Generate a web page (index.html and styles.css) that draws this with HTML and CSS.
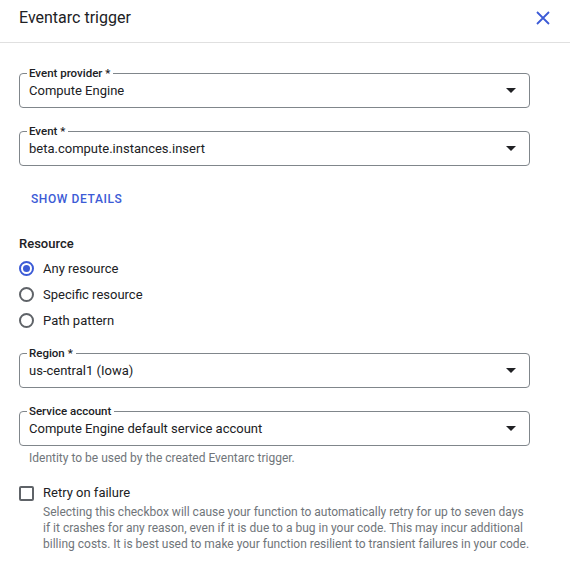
FILE: index.html
```html
<!DOCTYPE html>
<html>
<head>
<meta charset="utf-8">
<link rel="stylesheet" href="styles.css">
</head>
<body>
<div class="panel">
  <header class="header">
    <h1 class="title">Eventarc trigger</h1>
    <button class="close" aria-label="Close">
      <svg width="14" height="14" viewBox="0 0 14 14"><path d="M1 1L13 13M13 1L1 13" stroke="currentColor" stroke-width="1.8" fill="none"/></svg>
    </button>
  </header>
  <main class="content">
    <div class="field first">
      <span class="field-label">Event provider *</span>
      <span class="field-value">Compute Engine</span>
      <span class="arrow"></span>
    </div>
    <div class="field">
      <span class="field-label">Event *</span>
      <span class="field-value">beta.compute.instances.insert</span>
      <span class="arrow"></span>
    </div>
    <button class="text-btn">SHOW DETAILS</button>
    <div class="section-title">Resource</div>
    <div class="radios">
      <label class="radio-row"><span class="radio checked"></span>Any resource</label>
      <label class="radio-row"><span class="radio"></span>Specific resource</label>
      <label class="radio-row"><span class="radio"></span>Path pattern</label>
    </div>
    <div class="field region">
      <span class="field-label">Region *</span>
      <span class="field-value">us-central1 (Iowa)</span>
      <span class="arrow"></span>
    </div>
    <div class="field">
      <span class="field-label">Service account</span>
      <span class="field-value">Compute Engine default service account</span>
      <span class="arrow"></span>
    </div>
    <div class="hint">Identity to be used by the created Eventarc trigger.</div>
    <div class="check-row">
      <span class="checkbox"></span>
      <div class="check-text">
        <div class="check-label">Retry on failure</div>
        <div class="check-desc">Selecting this checkbox will cause your function to automatically retry for up to seven days if it crashes for any reason, even if it is due to a bug in your code. This may incur additional billing costs. It is best used to make your function resilient to transient failures in your code.</div>
      </div>
    </div>
  </main>
</div>
</body>
</html>
```

FILE: styles.css
```css
* { box-sizing: border-box; }
html, body { margin: 0; padding: 0; background: #fff; }
body {
  font-family: Roboto, "Liberation Sans", Arial, sans-serif;
  color: #202124;
}
.panel { width: 570px; }
.header {
  height: 43px;
  display: flex;
  align-items: center;
  justify-content: space-between;
  padding: 0 20px 7px 19px;
  border-bottom: 1px solid #e0e0e0;
}
.title {
  margin: 0;
  font-size: 16px;
  font-weight: 400;
  line-height: 24px;
  color: #202124;
}
.close {
  border: 0;
  background: none;
  padding: 0;
  width: 14px;
  height: 14px;
  color: #3c5bd6;
  display: flex;
}
.content {
  padding: 0 40px 0 19px;
}
.field {
  position: relative;
  height: 35px;
  border: 1px solid #80868b;
  border-radius: 4px;
  display: flex;
  align-items: center;
  padding: 0 13px 0 9px;
  margin-top: 23px;
}
.field.first { margin-top: 30px; }
.field.region { margin-top: 20px; }
.field-label {
  position: absolute;
  top: -8px;
  left: 7px;
  padding: 0 3px 0 2px;
  background: #fff;
  font-size: 11.5px;
  font-weight: 500;
  line-height: 14px;
  color: #202124;
}
.field-value {
  flex: 1;
  font-size: 13px;
  line-height: 16px;
  padding-top: 1px;
}
.arrow {
  width: 0;
  height: 0;
  border-left: 5px solid transparent;
  border-right: 5px solid transparent;
  border-top: 5px solid #202124;
}
.text-btn {
  display: block;
  border: 0;
  background: none;
  font-family: inherit;
  font-size: 12px;
  font-weight: 500;
  letter-spacing: 0.6px;
  color: #3c5bd6;
  padding: 0 12px;
  height: 36px;
  margin-top: 15px;
}
.section-title {
  font-size: 13px;
  font-weight: 500;
  line-height: 16px;
  margin-top: 19px;
}
.radios {
  display: flex;
  flex-direction: column;
  margin-top: 3px;
}
.radio-row {
  display: flex;
  align-items: center;
  gap: 9px;
  height: 26px;
  font-size: 13px;
}
.radio {
  width: 15px;
  height: 15px;
  border-radius: 50%;
  border: 2px solid #5f6368;
  display: flex;
  align-items: center;
  justify-content: center;
}
.radio.checked { border-color: #3c5bd6; }
.radio.checked::after {
  content: "";
  width: 7px;
  height: 7px;
  border-radius: 50%;
  background: #3c5bd6;
}
.hint {
  font-size: 12px;
  line-height: 14px;
  color: #70757a;
  padding-left: 10px;
  margin-top: 5px;
}
.check-row {
  display: flex;
  gap: 9px;
  margin-top: 20px;
}
.checkbox {
  width: 15px;
  height: 15px;
  border: 2px solid #5f6368;
  border-radius: 2px;
  margin-top: 1px;
  flex: none;
}
.check-label {
  font-size: 13px;
  line-height: 16px;
}
.check-desc {
  font-size: 12px;
  line-height: 16px;
  color: #70757a;
  margin-top: 3px;
}
```
